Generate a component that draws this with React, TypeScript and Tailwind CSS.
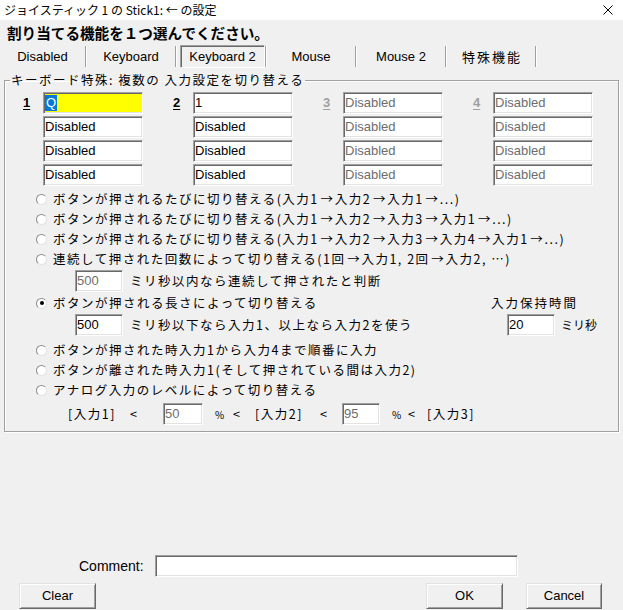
import { Fragment } from "react";
import type { ReactNode } from "react";

const JP = "font-['Noto_Sans_CJK_JP',sans-serif]";
const LAT = "font-['Liberation_Sans','Noto_Sans_CJK_JP',sans-serif]";
// MS UI Gothic is wider than Noto at the same size, so spread the glyphs a bit
const JPW = "text-[12.5px] tracking-[1.5px]";

// sunken edit box, like a classic win32 EDIT control
function Box({ w, dim, children, bg = "bg-white" }: { w: string; dim?: boolean; children?: ReactNode; bg?: string }) {
  return (
    <div
      className={`flex h-[22px] shrink-0 items-center border border-[#a0a0a0] border-b-white border-r-white pl-[1px] shadow-[inset_1px_1px_0_#696969,inset_-1px_-1px_0_#e3e3e3] ${LAT} text-[13px] leading-[16px] tracking-normal ${w} ${bg} ${dim ? "text-[#6d6d6d]" : "text-black"}`}
    >
      {children}
    </div>
  );
}

// long arrows like the bitmap font draws them
function J({ t }: { t: string }) {
  const parts = t.split("→");
  return (
    <>
      {parts.map((p, i) => (
        <Fragment key={i}>
          {p}
          {i < parts.length - 1 && <span className="inline-block w-[16px] text-center tracking-normal">→</span>}
        </Fragment>
      ))}
    </>
  );
}

function Radio({ checked, t }: { checked?: boolean; t: string }) {
  return (
    <div className="flex h-[20px] items-center pl-[14px]">
      <span className="flex h-[11px] w-[11px] shrink-0 items-center justify-center rounded-full border border-[#8c8c8c] border-b-[#e3e3e3] border-r-[#e3e3e3] bg-white">
        {checked && <span className="h-[4px] w-[4px] rounded-full bg-black" />}
      </span>
      <span className={`ml-[6px] whitespace-nowrap leading-[20px] ${JPW}`}>
        <J t={t} />
      </span>
    </div>
  );
}

function Sep() {
  return <span className="h-[21px] w-[2px] shrink-0 border-l border-r border-l-[#a0a0a0] border-r-white" />;
}

function Button({ w, children }: { w: string; children: ReactNode }) {
  return (
    <div
      className={`flex h-[26px] items-center justify-center border border-[#e3e3e3] border-b-[#696969] border-r-[#696969] bg-[#f0f0f0] shadow-[inset_1px_1px_0_#fff,inset_-1px_-1px_0_#a0a0a0] ${LAT} text-[13px] ${w}`}
    >
      {children}
    </div>
  );
}

const columns = [
  { label: "1", dim: false, values: ["Q", "Disabled", "Disabled", "Disabled"] },
  { label: "2", dim: false, values: ["1", "Disabled", "Disabled", "Disabled"] },
  { label: "3", dim: true, values: ["Disabled", "Disabled", "Disabled", "Disabled"] },
  { label: "4", dim: true, values: ["Disabled", "Disabled", "Disabled", "Disabled"] },
];

export default function App() {
  return (
    <div className={`h-[610px] w-[623px] overflow-hidden bg-[#f0f0f0] text-black ${JP}`}>
      {/* title bar */}
      <div className="flex h-[20px] items-center justify-between bg-white pl-[4px] pr-[10px]">
        <span className="text-[12px] leading-[20px]">ジョイスティック 1 の Stick1: ← の設定</span>
        <svg width="10" height="10" viewBox="0 0 10 10" className="block">
          <path d="M0.5 0.5 L9.5 9.5 M9.5 0.5 L0.5 9.5" stroke="#000" strokeWidth="1" fill="none" />
        </svg>
      </div>

      <div className="flex h-[25px] items-center pl-[7px] text-[14.6px] font-bold leading-[25px]">
        割り当てる機能を１つ選んでください。
      </div>

      {/* function tabs */}
      <div className={`flex h-[23px] items-center ${LAT} text-[13px]`}>
        <div className="w-[85px] text-center">Disabled</div>
        <Sep />
        <div className="w-[88px] text-center">Keyboard</div>
        <Sep />
        <div className="flex w-[88px]">
          <div className="ml-[3px] flex h-[23px] w-[85px] items-center justify-center border border-[#a0a0a0] border-b-white border-r-white shadow-[inset_1px_1px_0_#696969]">
            Keyboard 2
          </div>
        </div>
        <Sep />
        <div className="w-[88px] text-center">Mouse</div>
        <Sep />
        <div className="w-[88px] text-center">Mouse 2</div>
        <Sep />
        <div className={`w-[88px] pl-[2px] text-center ${JP} text-[13px] tracking-[2px]`}>特殊機能</div>
        <Sep />
      </div>

      <fieldset className="mx-[4px] mt-[4px] border border-[#a0a0a0] px-[17px] pb-[5px] pt-[4px] shadow-[inset_1px_1px_0_#fff,1px_1px_0_#fff]">
        <legend className={`-ml-[12px] px-[1px] leading-[16px] ${JPW}`}>キーボード特殊: 複数の 入力設定を切り替える</legend>

        {/* four input sets */}
        <div className="flex gap-[29px]">
          {columns.map((col) => (
            <div key={col.label} className="flex">
              <div className={`w-[21px] pl-[1px] text-[13px] font-bold leading-[22px] underline underline-offset-2 ${LAT} ${col.dim ? "text-[#a0a0a0]" : ""}`}>
                {col.label}
              </div>
              <div className="flex flex-col gap-[2px]">
                {col.values.map((v, i) =>
                  col.label === "1" && i === 0 ? (
                    <Box key={i} w="w-[100px]" bg="bg-[#ffff00]">
                      <span className="bg-[#0078d7] px-[1px] text-white">Q</span>
                    </Box>
                  ) : (
                    <Box key={i} w="w-[100px]" dim={col.dim}>
                      {v}
                    </Box>
                  )
                )}
              </div>
            </div>
          ))}
        </div>

        <div className="mt-[3px] flex flex-col">
          <Radio t="ボタンが押されるたびに切り替える(入力1→入力2→入力1→...)" />
          <Radio t="ボタンが押されるたびに切り替える(入力1→入力2→入力3→入力1→...)" />
          <Radio t="ボタンが押されるたびに切り替える(入力1→入力2→入力3→入力4→入力1→...)" />
          <Radio t="連続して押された回数によって切り替える(1回→入力1, 2回→入力2, …)" />
          <div className="flex h-[24px] items-center pl-[53px]">
            <Box w="w-[48px]" dim>
              500
            </Box>
            <span className={`ml-[7px] ${JPW}`}>ミリ秒以内なら連続して押されたと判断</span>
          </div>
          <div className="flex">
            <div className="flex-1">
              <Radio checked t="ボタンが押される長さによって切り替える" />
            </div>
            <div className="w-[110px] text-[12.5px] leading-[20px] tracking-[2px]">入力保持時間</div>
          </div>
          <div className="flex h-[24px] items-center">
            <div className="flex flex-1 items-center pl-[53px]">
              <Box w="w-[48px]">500</Box>
              <span className={`ml-[7px] ${JPW}`}>ミリ秒以下なら入力1、以上なら入力2を使う</span>
            </div>
            <div className="flex w-[110px] items-center pl-[16px]">
              <Box w="w-[48px]">20</Box>
              <span className="ml-[6px] text-[12px]">ミリ秒</span>
            </div>
          </div>
          <div className="mt-[3px]">
            <Radio t="ボタンが押された時入力1から入力4まで順番に入力" />
          </div>
          <Radio t="ボタンが離された時入力1(そして押されている間は入力2)" />
          <Radio t="アナログ入力のレベルによって切り替える" />
          <div className={`mt-[2px] flex h-[24px] items-center pl-[46px] ${JPW}`}>
            <span className="w-[62px]">[入力1]</span>
            <span className="w-[33px]">&lt;</span>
            <Box w="w-[40px]" dim>
              50
            </Box>
            <span className="ml-[12px] w-[18px] text-[10px] tracking-normal">%</span>
            <span className="w-[22px]">&lt;</span>
            <span className="w-[65px]">[入力2]</span>
            <span className="w-[22px]">&lt;</span>
            <Box w="w-[38px]" dim>
              95
            </Box>
            <span className="ml-[12px] w-[16px] text-[10px] tracking-normal">%</span>
            <span className="w-[19px]">&lt;</span>
            <span>[入力3]</span>
          </div>
        </div>
      </fieldset>

      {/* comment */}
      <div className="mt-[123px] flex h-[22px] items-center pl-[79px]">
        <span className={`w-[76px] ${LAT} text-[14px]`}>Comment:</span>
        <Box w="w-[363px]" />
      </div>

      <div className="mt-[6px] flex pl-[19px] pr-[21px]">
        <Button w="w-[77px]">Clear</Button>
        <div className="flex-1" />
        <Button w="w-[77px]">OK</Button>
        <div className="w-[23px]" />
        <Button w="w-[76px]">Cancel</Button>
      </div>
    </div>
  );
}
